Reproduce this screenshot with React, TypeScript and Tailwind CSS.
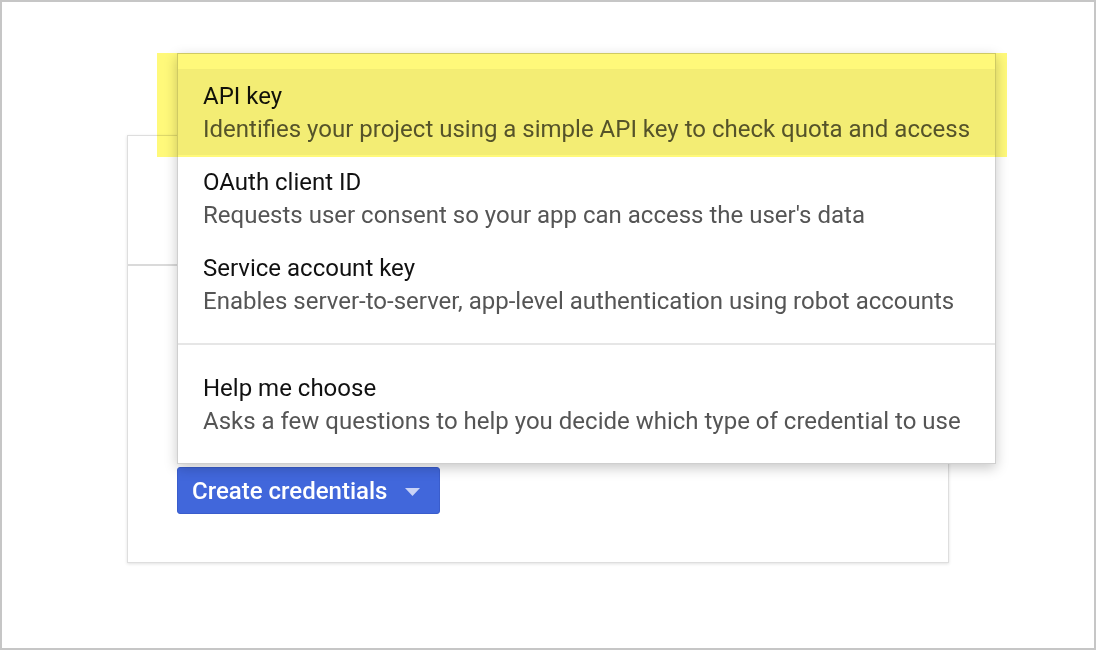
const items = [
  {
    title: 'API key',
    desc: 'Identifies your project using a simple API key to check quota and access',
    active: true,
  },
  {
    title: 'OAuth client ID',
    desc: "Requests user consent so your app can access the user's data",
  },
  {
    title: 'Service account key',
    desc: 'Enables server-to-server, app-level authentication using robot accounts',
  },
];

function MenuItem({ title, desc, active }: { title: string; desc: string; active?: boolean }) {
  return (
    <div className={`px-[25px] py-[10px] ${active ? 'bg-[#f3f3f3]' : ''}`}>
      <div className="text-[24px] leading-[34px] text-[#111]">{title}</div>
      <div className="text-[24px] leading-[32px] text-[#555]">{desc}</div>
    </div>
  );
}

export default function App() {
  return (
    <div
      className="relative w-[1096px] h-[650px] border-2 border-[#c6c6c6] bg-white overflow-hidden"
      style={{ fontFamily: 'Roboto, "Liberation Sans", sans-serif' }}
    >
      {/* credentials card behind the menu */}
      <div className="ml-[125px] mt-[133px] w-[822px] h-[428px] border border-[#dedede] bg-white shadow-[0_1px_3px_rgba(0,0,0,0.12)] pt-[128px]">
        <div className="h-[2px] bg-[#dadada]" />
        <div className="pl-[49px] pt-[201px]">
          <button className="flex items-center h-[47px] w-[263px] pl-[14px] rounded-[3px] border border-[#3a5dcc] bg-[#4167db] text-white text-[24px] font-medium">
            Create credentials
            <svg className="ml-[18px] mt-[2px]" width="15" height="8" viewBox="0 0 15 8">
              <path d="M0 0h15L7.5 8z" fill="#c9d3f6" />
            </svg>
          </button>
        </div>
      </div>

      {/* dropdown menu */}
      <div className="absolute left-[175px] top-[51px] w-[819px] border border-[#cfcfcf] bg-white shadow-[0_4px_12px_rgba(0,0,0,0.22)]">
        <div className="pt-[15px] pb-4">
          {items.map((it) => (
            <MenuItem key={it.title} {...it} />
          ))}
        </div>
        <div className="h-[2px] bg-[#e6e6e6]" />
        <div className="py-4">
          <MenuItem
            title="Help me choose"
            desc="Asks a few questions to help you decide which type of credential to use"
          />
        </div>
      </div>

      {/* yellow highlight */}
      <div className="absolute left-[155px] top-[51px] w-[850px] h-[104px] bg-[#fff97a] mix-blend-multiply pointer-events-none" />
    </div>
  );
}
